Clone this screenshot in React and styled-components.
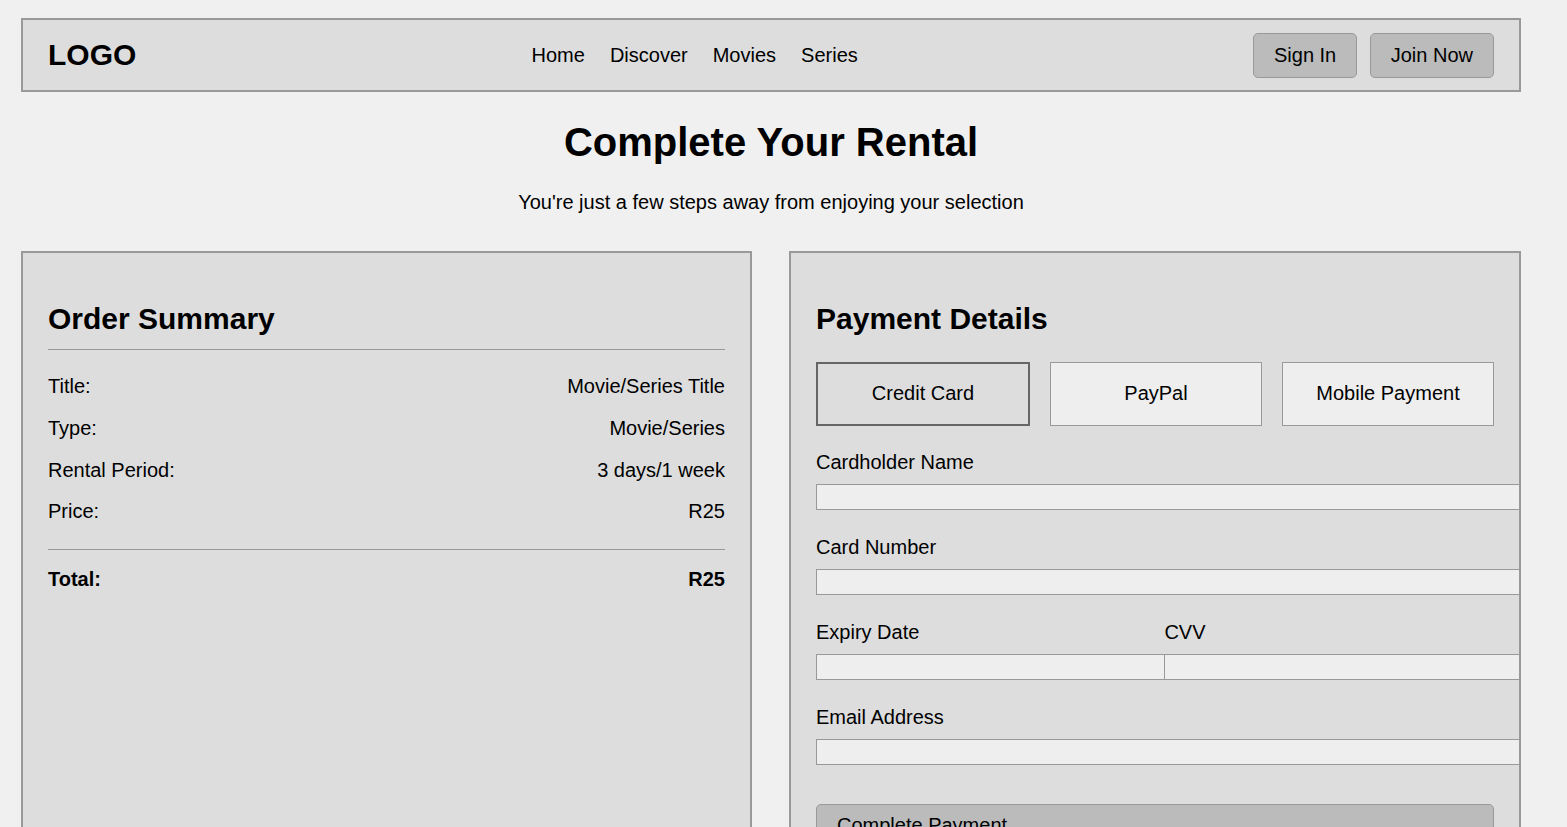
import React, { useState } from "react";
import styled, { createGlobalStyle } from "styled-components";

const GlobalStyle = createGlobalStyle`
  html { scrollbar-width: none; }
  html::-webkit-scrollbar { display: none; }
  body {
    margin: 0;
    background: #f0f0f0;
    color: #000;
    font-family: "Liberation Sans", Arial, sans-serif;
    font-size: 20px;
  }
  * { font-family: inherit; }
`;

const Page = styled.div`
  width: 1500px;
  padding: 18px 0 0 21px;
`;

const Header = styled.header`
  display: flex;
  align-items: center;
  justify-content: space-between;
  background: #ddd;
  border: 2px solid #999;
  padding: 12.5px 25px;
  height: 45px;
  box-sizing: content-box;
`;

const Logo = styled.div`
  font-size: 30px;
  font-weight: bold;
`;

const Nav = styled.nav`
  display: flex;
  gap: 25px;
`;

const NavLink = styled.a`
  color: #000;
  text-decoration: none;
  font-size: 20px;
`;

const Actions = styled.div`
  display: flex;
  gap: 12.5px;
`;

const HeaderButton = styled.button`
  background: #bbb;
  border: 1px solid #999;
  border-radius: 5px;
  padding: 10px 20px;
  font-size: 20px;
  line-height: 23px;
  color: #000;
  height: 45px;
`;

const Hero = styled.section`
  text-align: center;
`;

const Title = styled.h1`
  font-size: 40px;
  font-weight: bold;
  margin: 26.5px 0 26px;
  line-height: 46px;
`;

const Subtitle = styled.p`
  margin: 0;
  font-size: 20px;
  line-height: 23px;
`;

const Grid = styled.div`
  display: grid;
  grid-template-columns: 731px 1fr;
  gap: 37px;
  margin-top: 37.5px;
`;

const Card = styled.section`
  background: #ddd;
  border: 2px solid #999;
  padding: 25px 25px 40px;
  min-width: 0;
`;

const CardTitle = styled.h2`
  font-size: 30px;
  font-weight: bold;
  line-height: 34.5px;
  margin: 24px 0 25px;
  padding-bottom: ${(p) => (p.$ruled ? "12.5px" : "0")};
  border-bottom: ${(p) => (p.$ruled ? "1px solid #999" : "none")};
`;

const Row = styled.div`
  display: flex;
  justify-content: space-between;
  line-height: 23px;
  margin-bottom: 18.75px;
`;

const TotalRow = styled(Row)`
  font-weight: bold;
  margin-top: 26px;
  margin-bottom: 0;
  border-top: 1px solid #999;
  padding-top: 18px;
`;

const Methods = styled.div`
  display: flex;
  gap: 20px;
  margin-bottom: 25px;
`;

const Method = styled.button`
  flex: 1;
  background: ${(p) => (p.$active ? "#ddd" : "#eee")};
  border: ${(p) => (p.$active ? "2px solid #666" : "1px solid #999")};
  padding: 18.5px 10px;
  font-size: 20px;
  line-height: 23px;
  color: #000;
  text-align: center;
`;

const Group = styled.div`
  margin-bottom: 26px;
  flex: 1;
  min-width: 0;
`;

const Label = styled.label`
  display: block;
  font-size: 20px;
  line-height: 23px;
  margin-bottom: 10px;
`;

const Input = styled.input`
  display: block;
  box-sizing: content-box;
  width: 100%;
  height: 16px;
  padding: 4px 12px;
  border: 1px solid #999;
  background: #eee;
  font-size: 13.33px;
  margin: 0;
  outline: none;
`;

const Pair = styled.div`
  display: flex;
  gap: 18.75px;
`;

const SubmitButton = styled.button`
  display: block;
  width: 100%;
  margin-top: 39px;
  background: #bbb;
  border: 1px solid #999;
  border-radius: 5px;
  padding: 9px 20px 12px;
  font-size: 20px;
  line-height: 23px;
  color: #000;
  text-align: left;
`;

const summary = [
  ["Title:", "Movie/Series Title"],
  ["Type:", "Movie/Series"],
  ["Rental Period:", "3 days/1 week"],
  ["Price:", "R25"],
];

export default function App() {
  const [method, setMethod] = useState("Credit Card");
  return (
    <>
      <GlobalStyle />
      <Page>
        <Header>
          <Logo>LOGO</Logo>
          <Nav>
            <NavLink href="#">Home</NavLink>
            <NavLink href="#">Discover</NavLink>
            <NavLink href="#">Movies</NavLink>
            <NavLink href="#">Series</NavLink>
          </Nav>
          <Actions>
            <HeaderButton>Sign In</HeaderButton>
            <HeaderButton>Join Now</HeaderButton>
          </Actions>
        </Header>

        <Hero>
          <Title>Complete Your Rental</Title>
          <Subtitle>You're just a few steps away from enjoying your selection</Subtitle>
        </Hero>

        <Grid>
          <Card>
            <CardTitle $ruled>Order Summary</CardTitle>
            {summary.map(([k, v]) => (
              <Row key={k}>
                <span>{k}</span>
                <span>{v}</span>
              </Row>
            ))}
            <TotalRow>
              <span>Total:</span>
              <span>R25</span>
            </TotalRow>
          </Card>

          <Card>
            <CardTitle>Payment Details</CardTitle>
            <Methods>
              {["Credit Card", "PayPal", "Mobile Payment"].map((m) => (
                <Method key={m} $active={method === m} onClick={() => setMethod(m)}>
                  {m}
                </Method>
              ))}
            </Methods>
            <Group>
              <Label>Cardholder Name</Label>
              <Input type="text" />
            </Group>
            <Group>
              <Label>Card Number</Label>
              <Input type="text" />
            </Group>
            <Pair>
              <Group>
                <Label>Expiry Date</Label>
                <Input type="text" />
              </Group>
              <Group>
                <Label>CVV</Label>
                <Input type="text" />
              </Group>
            </Pair>
            <Group>
              <Label>Email Address</Label>
              <Input type="email" />
            </Group>
            <SubmitButton>Complete Payment</SubmitButton>
          </Card>
        </Grid>
      </Page>
    </>
  );
}
